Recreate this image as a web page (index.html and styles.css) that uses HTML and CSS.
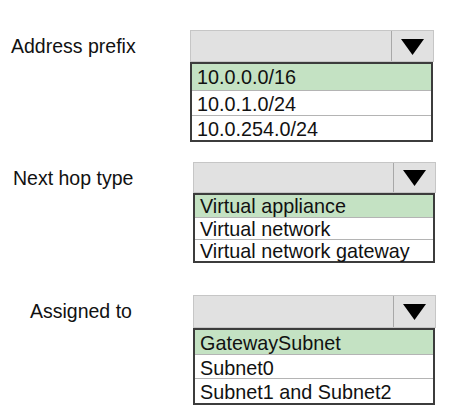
FILE: index.html
```html
<!DOCTYPE html>
<html lang="en">
<head>
    <meta charset="UTF-8">
    <title>Route settings</title>
    <link rel="stylesheet" href="styles.css">
</head>
<body>

<div class="sheet">
    <div class="field field-prefix">
        <div class="label">Address prefix</div>
        <div class="select">
            <div class="select-head">
                <div class="select-value"></div>
                <div class="select-arrow"><svg width="23" height="16" viewBox="0 0 23 16"><polygon points="0,0 23,0 11.5,16" fill="#000"/></svg></div>
            </div>
            <ul class="options">
                <li class="picked">10.0.0.0/16</li>
                <li>10.0.1.0/24</li>
                <li>10.0.254.0/24</li>
            </ul>
        </div>
    </div>

    <div class="field field-hop">
        <div class="label">Next hop type</div>
        <div class="select">
            <div class="select-head">
                <div class="select-value"></div>
                <div class="select-arrow"><svg width="23" height="16" viewBox="0 0 23 16"><polygon points="0,0 23,0 11.5,16" fill="#000"/></svg></div>
            </div>
            <ul class="options">
                <li class="picked">Virtual appliance</li>
                <li>Virtual network</li>
                <li>Virtual network gateway</li>
            </ul>
        </div>
    </div>

    <div class="field field-assigned">
        <div class="label">Assigned to</div>
        <div class="select">
            <div class="select-head">
                <div class="select-value"></div>
                <div class="select-arrow"><svg width="23" height="16" viewBox="0 0 23 16"><polygon points="0,0 23,0 11.5,16" fill="#000"/></svg></div>
            </div>
            <ul class="options">
                <li class="picked">GatewaySubnet</li>
                <li>Subnet0</li>
                <li>Subnet1 and Subnet2</li>
            </ul>
        </div>
    </div>
</div>

</body>
</html>
```

FILE: styles.css
```css
* { box-sizing: border-box; }
body { margin: 0; background: #fff; font-family: "Liberation Sans", Arial, sans-serif; color: #111; }
.sheet { padding-top: 30px; }

.field { display: flex; align-items: flex-start; }
.label { width: 190px; height: 32px; line-height: 32px; font-size: 19.5px; padding-left: 11px; }

.select { width: 244px; }
.select-head { display: flex; height: 32px; background: #e1e1e1; border: 1px solid #c6c6c6; }
.select-value { flex: 1; }
.select-arrow { width: 42px; border-left: 1px solid #a8a8a8; display: flex; align-items: center; justify-content: center; padding-top: 1px; }

.options { list-style: none; margin: 0; padding: 0; border: 2px solid #3c3c3c; margin-right: 1px; }
.options li { height: 25px; line-height: 27px; font-size: 19.8px; padding-left: 5px; border-top: 1px solid #b4b4b4; white-space: nowrap; }
.options li:first-child { border-top: none; }
.options li.picked { background: #c4e2c3; }

/* each block sits a little differently in the picture */
.field-prefix .options li:first-child { height: 26px; }

.field-hop { margin-top: 20px; }
.field-hop .label { padding-left: 13px; }
.field-hop .select { margin-left: 3px; width: 243px; }
.field-hop .select-head { height: 31px; }
.field-hop .options li { height: 22px; line-height: 23px; }

.field-assigned { margin-top: 32px; }
.field-assigned .label { padding-left: 30px; height: 33px; line-height: 33px; }
.field-assigned .select { margin-left: 3px; width: 243px; }
.field-assigned .select-head { height: 33px; }
.field-assigned .options li { height: 24px; line-height: 26px; }
.field-assigned .options li:last-child { height: 25px; }
```
